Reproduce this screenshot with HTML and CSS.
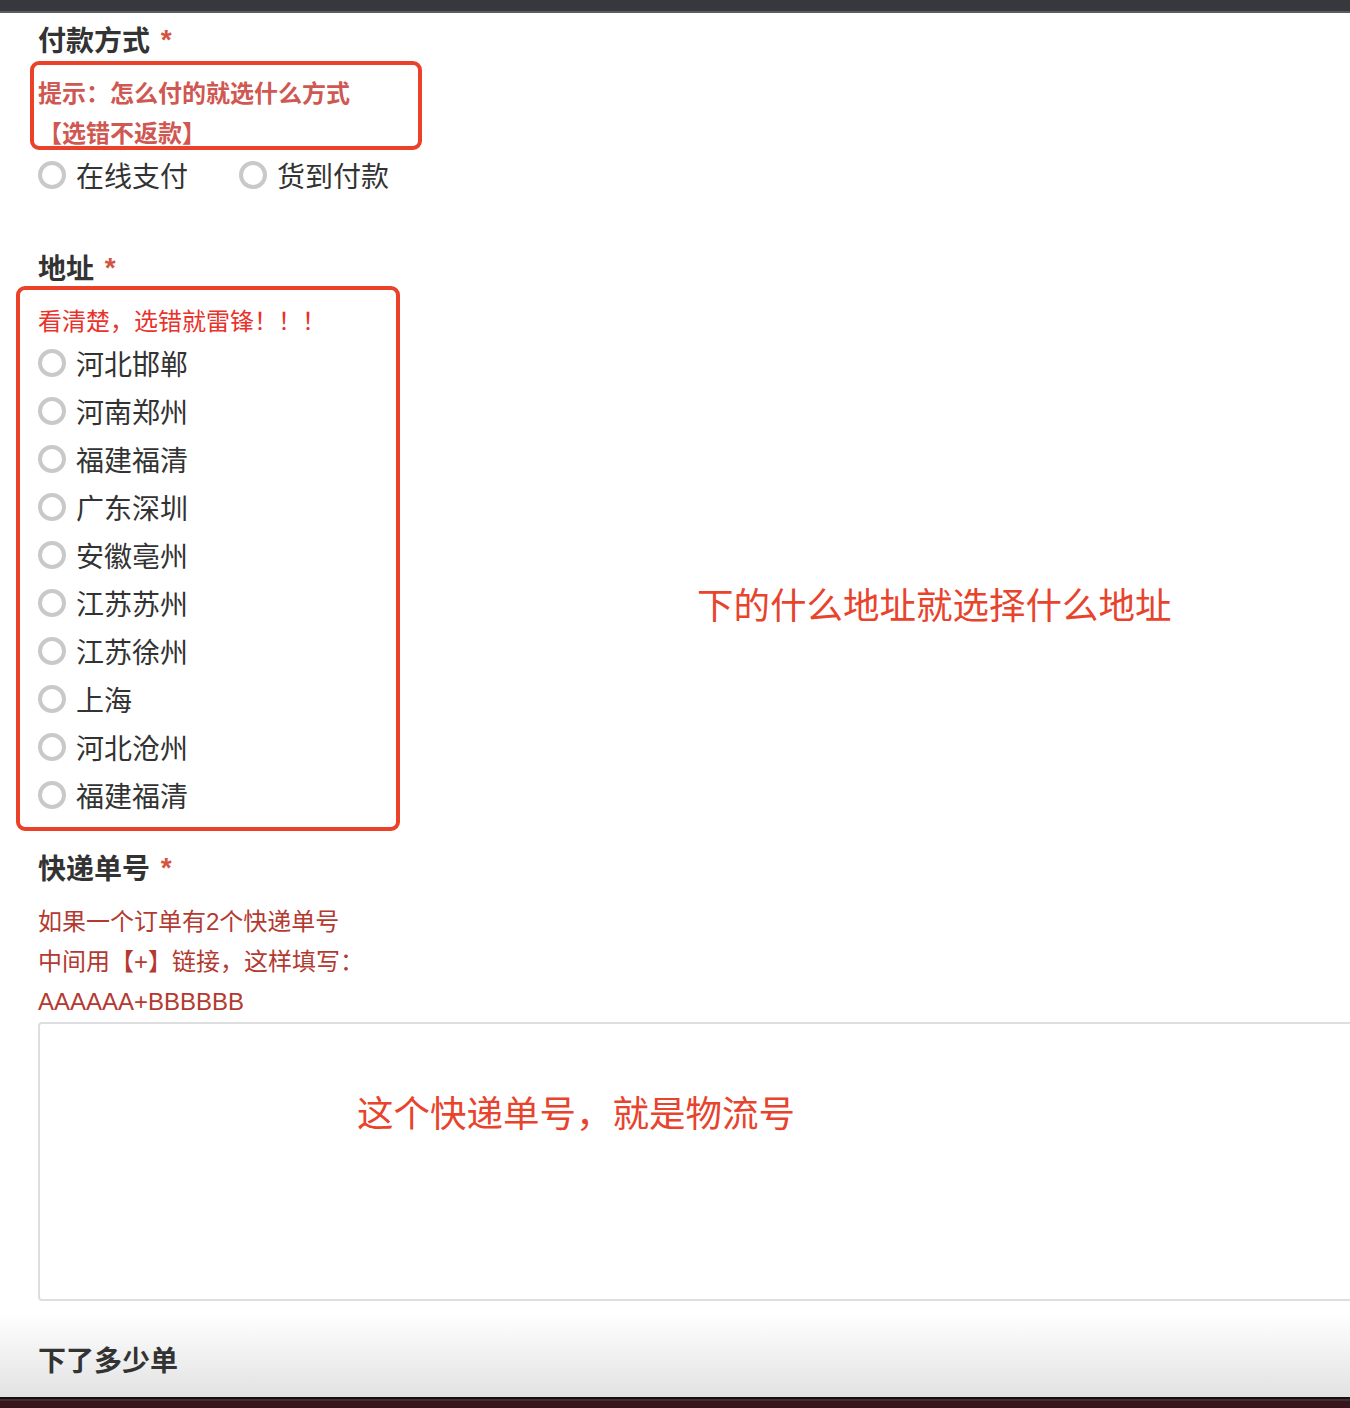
FILE: index.html
```html
<!DOCTYPE html>
<html lang="zh-CN">
<head>
  <meta charset="UTF-8" />
  <meta name="viewport" content="width=device-width, initial-scale=1.0"/>
  <title>订单信息</title>
  <link rel="stylesheet" href="styles.css">
</head>
<body>
  <div class="topbar"></div>

  <form class="form">
    <div class="field field-pay">
      <div class="field-label">付款方式 <span class="req">*</span></div>
      <div class="hint hint-pay marked mark-pay">
        <p>提示：怎么付的就选什么方式</p>
        <p>【选错不返款】</p>
      </div>
      <div class="options inline">
        <label class="opt"><input type="radio" name="pay"><span class="dot"></span>在线支付</label>
        <label class="opt"><input type="radio" name="pay"><span class="dot"></span>货到付款</label>
      </div>
    </div>

    <div class="field field-addr">
      <div class="field-label">地址 <span class="req">*</span></div>
      <div class="marked mark-addr">
        <p class="hint hint-addr">看清楚，选错就雷锋！！！</p>
        <div class="options">
          <label class="opt"><input type="radio" name="addr"><span class="dot"></span>河北邯郸</label>
          <label class="opt"><input type="radio" name="addr"><span class="dot"></span>河南郑州</label>
          <label class="opt"><input type="radio" name="addr"><span class="dot"></span>福建福清</label>
          <label class="opt"><input type="radio" name="addr"><span class="dot"></span>广东深圳</label>
          <label class="opt"><input type="radio" name="addr"><span class="dot"></span>安徽亳州</label>
          <label class="opt"><input type="radio" name="addr"><span class="dot"></span>江苏苏州</label>
          <label class="opt"><input type="radio" name="addr"><span class="dot"></span>江苏徐州</label>
          <label class="opt"><input type="radio" name="addr"><span class="dot"></span>上海</label>
          <label class="opt"><input type="radio" name="addr"><span class="dot"></span>河北沧州</label>
          <label class="opt"><input type="radio" name="addr"><span class="dot"></span>福建福清</label>
        </div>
        <!-- 标注 -->
        <div class="note note-addr">下的什么地址就选择什么地址</div>
      </div>
    </div>

    <div class="field field-track">
      <div class="field-label">快递单号 <span class="req">*</span></div>
      <div class="hint hint-track">
        <p>如果一个订单有2个快递单号</p>
        <p>中间用【+】链接，这样填写：</p>
        <p>AAAAAA+BBBBBB</p>
      </div>
      <div class="area-wrap">
        <textarea class="area"></textarea>
        <div class="note note-track">这个快递单号，就是物流号</div>
      </div>
    </div>

    <div class="field field-tail">
      <div class="field-label">下了多少单</div>
    </div>
  </form>

  <div class="footer"></div>
</body>
</html>
```

FILE: styles.css
```css
body {
  margin: 0;
  font-family: "Liberation Sans", "Noto Sans CJK SC", sans-serif;
  color: #333;
  background: #fff;
  overflow-x: hidden;
}

p {
  margin: 0;
}

.topbar {
  height: 11px;
  background: #36383d;
  border-bottom: 2px solid #5a5c60;
}

.form {
  overflow: hidden;
}

.field {
  padding-left: 38px;
}

.field-label {
  font-size: 28px;
  font-weight: bold;
  line-height: 40px;
  color: #333;
}

.req {
  color: #d2553f;
  font-size: 28px;
  margin-left: 3px;
  vertical-align: top;
  line-height: 36px;
}

.hint {
  font-size: 24px;
  line-height: 40px;
}

.field-pay {
  padding-top: 9px;
}

.hint-pay {
  margin-top: 12px;
  color: #cf5852;
  font-weight: bold;
}

.field-addr {
  margin-top: 51px;
}

.hint-addr {
  color: #e8322b;
}

.field-track {
  margin-top: 31px;
}

.hint-track {
  margin-top: 12px;
  color: #b33a30;
}

.marked {
  position: relative;
}

.marked::after {
  content: "";
  position: absolute;
  border: 4px solid #ea4128;
  border-radius: 9px;
}

.mark-pay::after {
  left: -8px;
  top: -13px;
  width: 384px;
  height: 81px;
}

.mark-addr {
  margin-top: 12px;
}

.mark-addr::after {
  left: -22px;
  top: -16px;
  width: 376px;
  height: 537px;
}

.options {
  margin-top: -3px;
}

.options.inline {
  display: flex;
  gap: 51px;
}

.opt {
  display: flex;
  align-items: center;
  height: 48px;
  font-size: 28px;
  color: #333;
}

.opt input {
  display: none;
}

.dot {
  width: 28px;
  height: 28px;
  box-sizing: border-box;
  border: 4px solid #c9c9c9;
  border-radius: 50%;
  margin-right: 10px;
  background: #fff;
}

.area-wrap {
  position: relative;
}

.area {
  display: block;
  width: 1330px;
  height: 279px;
  box-sizing: border-box;
  border: 2px solid #dedede;
  border-radius: 4px;
  resize: none;
  font: inherit;
}

.note {
  position: absolute;
  font-size: 36.5px;
  line-height: 40px;
  color: #e8432c;
  white-space: nowrap;
}

.note-addr {
  left: 659px;
  top: 285px;
}

.note-track {
  left: 319px;
  top: 73px;
}

.field-tail {
  padding-top: 41px;
  padding-bottom: 15px;
  background: linear-gradient(#fff 0%, #fff 12%, #e2e2e2 100%);
}

.footer {
  height: 10px;
  border-top: 2px solid #111;
  background: #35151b;
  box-shadow: inset 0 2px 0 #4a2a2f;
}
```
